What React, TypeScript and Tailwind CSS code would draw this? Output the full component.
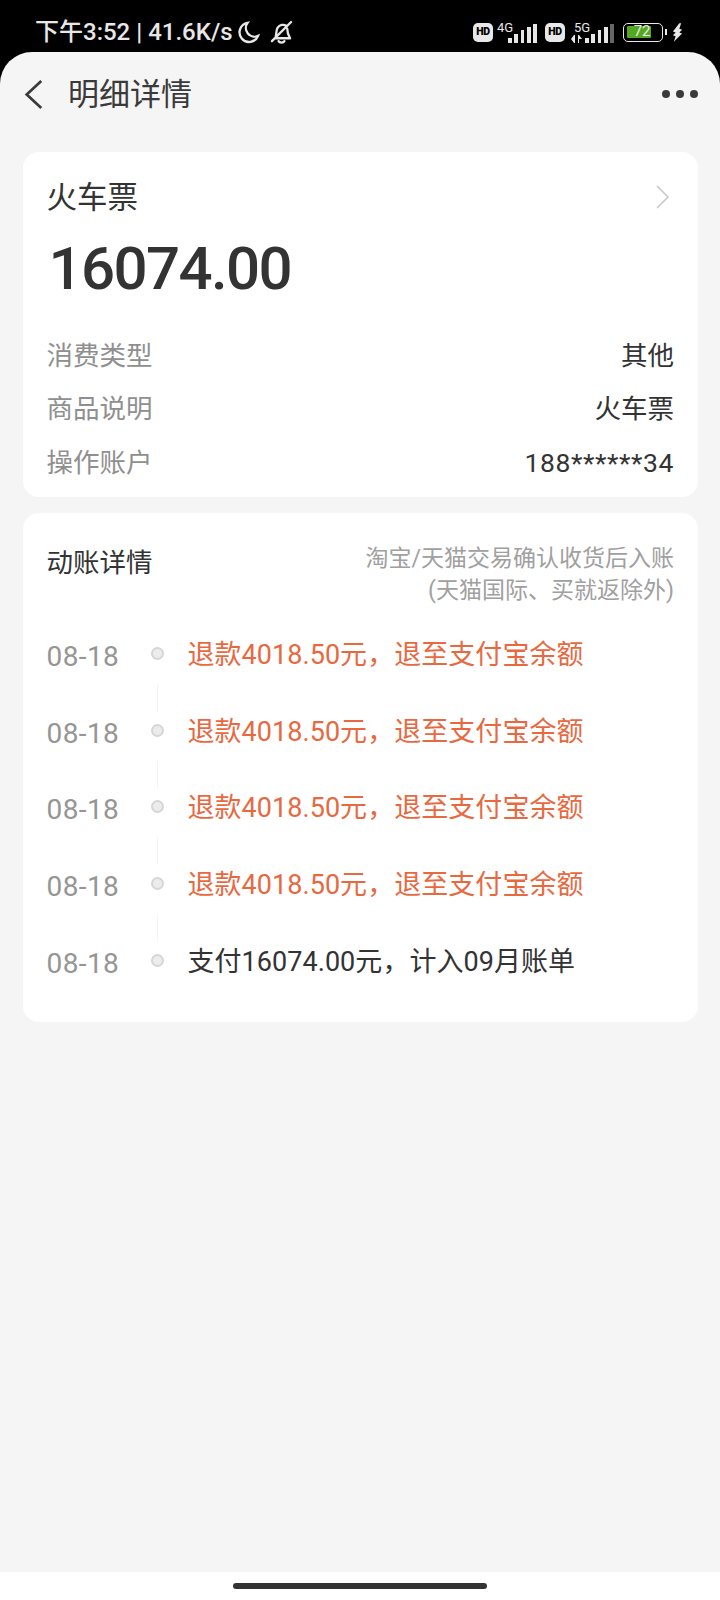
const cjk = '"Roboto","Noto Sans CJK SC",sans-serif';

function Bars({ dim }: { dim?: boolean }) {
  const hs = [5, 9, 13, 16, 19];
  return (
    <div className="flex items-end gap-[2.5px] h-[19px]">
      {hs.map((h, i) => (
        <div key={i} className={i === 4 && dim ? "w-[3.8px] bg-[#666666]" : "w-[3.8px] bg-[#e6e6e6]"} style={{ height: h }} />
      ))}
    </div>
  );
}

function Hd() {
  return (
    <div className="w-[20px] h-[19px] rounded-[5px] bg-[#e8e8e8] text-black text-[10.5px] font-black flex items-center justify-center leading-none tracking-[-0.3px]">HD</div>
  );
}

function Row({ label, value, wide }: { label: string; value: string; wide?: boolean }) {
  return (
    <div className="flex justify-between items-center h-[53.5px]">
      <span className="text-[26.5px] text-[#8f8f8f]">{label}</span>
      <span className={wide ? "text-[26.5px] tracking-[0.6px] text-[#333333]" : "text-[26.5px] text-[#333333]"}>{value}</span>
    </div>
  );
}

function TimelineRow({ text, orange, last }: { text: string; orange?: boolean; last?: boolean }) {
  return (
    <div className="flex h-[76.7px]">
      <span className="w-[95px] text-[28px] tracking-[0.4px] leading-[62px] text-[#959595]">08-18</span>
      <div className="w-[32px] flex flex-col items-center">
        <div className="mt-[21px] w-[13px] h-[13px] rounded-full border-[2px] border-[#d6d6d6] bg-[#ececec] shrink-0" />
        {!last && <div className="mt-[24px] w-px h-[28px] bg-[#f5f5f5] shrink-0" />}
      </div>
      <span className={orange ? "ml-[14px] text-[27px] tracking-[0.05px] leading-[58px] text-[#e8693f]" : "ml-[14px] text-[27px] tracking-[0.05px] leading-[58px] text-[#333333]"}>{text}</span>
    </div>
  );
}

export default function App() {
  return (
    <div className="w-[720px] h-[1600px] bg-black flex flex-col overflow-hidden" style={{ fontFamily: cjk }}>
      <div className="h-[52px] flex items-start justify-between pt-[19px] pl-[35px] pr-[37px] text-[#e8e8e8] shrink-0">
        <div className="flex items-center h-[26px] text-[24px] font-medium leading-none">
          <span>下午3:52 | 41.6K/s</span>
          <svg className="ml-[4px]" width="23" height="23" viewBox="0 0 24 24" fill="none" stroke="#e8e8e8" strokeWidth="2.4">
            <path d="M11 2a10 10 0 1 0 11 13.5A9 9 0 0 1 11 2z" />
          </svg>
          <svg className="ml-[10px]" width="23" height="25" viewBox="0 0 24 26" fill="none" stroke="#e8e8e8" strokeWidth="2.4" strokeLinecap="round" strokeLinejoin="round">
            <path d="M6 17c1-3 0-6 2-9 2-3 6-4 9-2M18 9c0 3 .5 6 3 10H5M2 22 22 2M9 22c1 2 5 2 6 0" />
          </svg>
        </div>
        <div className="flex items-center h-[26px]">
          <Hd />
          <div className="relative ml-[4px] w-[40px] h-[21px] flex items-end justify-end">
            <Bars />
            <span className="absolute left-0 -top-[1px] text-[13px] leading-none">4G</span>
          </div>
          <div className="ml-[8px]"><Hd /></div>
          <div className="relative ml-[6px] w-[43px] h-[21px] flex items-end justify-end">
            <Bars dim />
            <span className="absolute left-[3px] -top-[1px] text-[13px] leading-none">5G</span>
            <svg className="absolute left-0 bottom-0" width="11" height="8" viewBox="0 0 11 8" fill="#e6e6e6">
              <path d="M0 4 3 0h1v8H3zM7 0h1l3 4H8v4H7z" />
            </svg>
          </div>
          <div className="ml-[9px] w-[40px] h-[19px] rounded-[5px] border-[1.5px] border-[#e8e8e8] py-[2.5px] pl-[2.5px] flex">
            <div className="w-[24px] h-full rounded-[1px] bg-[#53a81f] text-[15px] leading-[11px] text-right text-[#e8e8e8]">72</div>
          </div>
          <div className="ml-[2px] w-[2px] h-[6px] bg-[#e8e8e8]" />
          <svg className="ml-[5px]" width="11" height="19" viewBox="0 0 12 20" fill="#e8e8e8">
            <path d="M8 0 1 9l3 1-3 3 3 1-2 6 9-9-3-1 3-3-3-1 2-6z" />
          </svg>
        </div>
      </div>
      <div className="flex-1 bg-[#f5f5f5] rounded-t-[32px] flex flex-col">
        <div className="h-[84px] flex items-center justify-between pl-[23px] pr-[22px] shrink-0">
          <div className="flex items-center">
            <svg width="21" height="31" viewBox="0 0 20 32" fill="none" stroke="#3a3a3a" strokeWidth="2.8">
              <path d="M18 2 3 16l15 14" />
            </svg>
            <span className="ml-[24px] text-[31px] leading-none text-[#3a3a3a]">明细详情</span>
          </div>
          <div className="flex gap-[6px]">
            <div className="w-[8px] h-[8px] rounded-full bg-[#3a3a3a]" />
            <div className="w-[8px] h-[8px] rounded-full bg-[#3a3a3a]" />
            <div className="w-[8px] h-[8px] rounded-full bg-[#3a3a3a]" />
          </div>
        </div>
        <div className="pl-[23px] pr-[22px] pt-[16px] flex flex-col gap-[16px]">
          <div className="bg-white rounded-[16px] h-[345px] pl-[23.5px] pr-[24px] pt-[25px]">
            <div className="flex items-center justify-between h-[42px]">
              <span className="text-[30.5px] text-[#333333]">火车票</span>
              <svg className="mr-[4px] -mt-[2px]" width="14" height="24" viewBox="0 0 14 24" fill="none" stroke="#c8c8c8" strokeWidth="1.6">
                <path d="m1 1 11 11L1 23" />
              </svg>
            </div>
            <div className="mt-[15px] ml-[2px] h-[70px] flex items-center text-[60px] font-medium leading-none tracking-[-1.6px] text-[#333333]">16074.00</div>
            <div className="mt-[25px]">
              <Row label="消费类型" value="其他" />
              <Row label="商品说明" value="火车票" />
              <Row label="操作账户" value="188******34" wide />
            </div>
          </div>
          <div className="bg-white rounded-[16px] h-[509px] pl-[23.5px] pr-[24px] pt-[30px]">
            <div className="flex justify-between h-[80px]">
              <span className="text-[26.5px] leading-[40px] text-[#333333]">动账详情</span>
              <div className="text-[23px] leading-[32px] text-right text-[#a0a0a0]">
                <div>淘宝/天猫交易确认收货后入账</div>
                <div>(天猫国际、买就返除外)</div>
              </div>
            </div>
            <div className="mt-[3px]">
              <TimelineRow orange text="退款4018.50元，退至支付宝余额" />
              <TimelineRow orange text="退款4018.50元，退至支付宝余额" />
              <TimelineRow orange text="退款4018.50元，退至支付宝余额" />
              <TimelineRow orange text="退款4018.50元，退至支付宝余额" />
              <TimelineRow last text="支付16074.00元，计入09月账单" />
            </div>
          </div>
        </div>
      </div>
      <div className="h-[28px] bg-white shrink-0 flex items-start justify-center pt-[11px]">
        <div className="w-[254px] h-[6px] rounded-full bg-[#333333]" />
      </div>
    </div>
  );
}
